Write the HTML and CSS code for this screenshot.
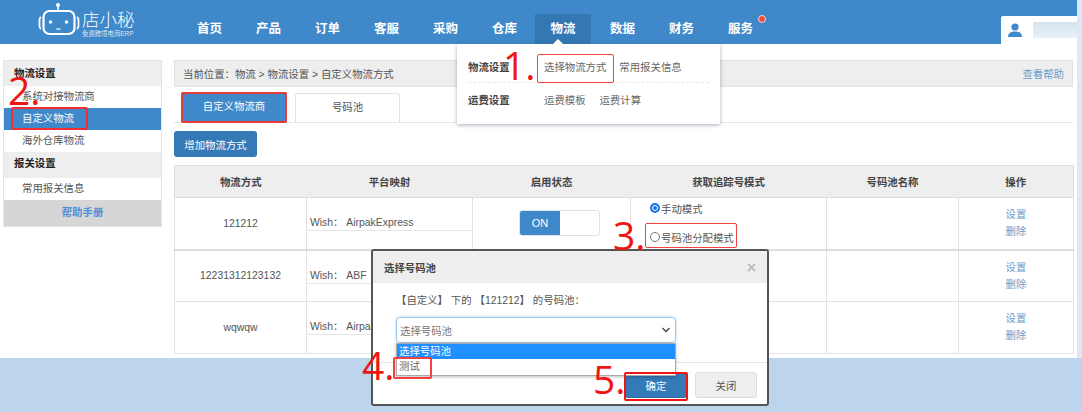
FILE: index.html
```html
<!DOCTYPE html>
<html lang="zh">
<head>
<meta charset="utf-8">
<title>选择物流方式</title>
<link rel="stylesheet" href="styles.css">
</head>
<body>
<div class="page">
  <header class="top">
    <div class="logo">
      <svg class="robot" width="42" height="36" viewBox="0 0 42 36" fill="none" stroke="#fff">
        <circle cx="20" cy="3" r="2" fill="#fff" stroke="none"/>
        <path d="M20 4v5" stroke-width="1.600"/>
        <rect x="5.500" y="9" width="31" height="23" rx="6" stroke-width="2.200"/>
        <path d="M3 15c-1 .5-1.500 1.500-1.500 3v6c0 1.500.5 2.500 1.500 3M39 15c1 .5 1.500 1.500 1.500 3v6c0 1.500-.5 2.500-1.500 3" stroke-width="1.800"/>
        <circle cx="12.500" cy="20" r="1.800" fill="#fff" stroke="none"/>
        <circle cx="28.500" cy="20" r="1.800" fill="#fff" stroke="none"/>
        <path d="M18.500 26.500q2 1.500 4 0" stroke-width="1.200"/>
      </svg>
      <div class="logo-text">
        <div class="logo-name">店小秘</div>
        <div class="logo-sub">免费跨境电商ERP</div>
      </div>
    </div>
    <nav class="nav">
      <a class="nav-item">首页</a>
      <a class="nav-item">产品</a>
      <a class="nav-item">订单</a>
      <a class="nav-item">客服</a>
      <a class="nav-item">采购</a>
      <a class="nav-item">仓库</a>
      <a class="nav-item nav-active">物流</a>
      <a class="nav-item">数据</a>
      <a class="nav-item">财务</a>
      <a class="nav-item">服务<span class="dot"></span></a>
    </nav>
    <div class="user">
      <svg width="16" height="14" viewBox="0 0 16 14" fill="#3f88c9"><circle cx="8" cy="4" r="3.600"/><path d="M1 14c0-4 3-5.500 7-5.500s7 1.500 7 5.500z"/></svg>
      <span class="user-blur"></span>
    </div>
  </header>

  <div class="content">
    <aside class="side">
      <div class="side-head">物流设置</div>
      <a class="side-link">系统对接物流商</a>
      <a class="side-link side-active">自定义物流</a>
      <a class="side-link">海外仓库物流</a>
      <div class="side-head side-head-2">报关设置</div>
      <a class="side-link">常用报关信息</a>
      <div class="side-help">帮助手册</div>
    </aside>

    <main class="main">
      <div class="crumb">
        <span>当前位置：物流 &gt; 物流设置 &gt; 自定义物流方式</span>
        <a class="help">查看帮助</a>
      </div>
      <div class="tabs">
        <a class="tab tab-active">自定义物流商</a>
        <a class="tab tab-pool">号码池</a>
      </div>
      <button class="btn-add">增加物流方式</button>
      <table class="grid">
        <colgroup>
          <col class="c1"><col class="c2"><col class="c3"><col class="c4"><col class="c5"><col class="c6">
        </colgroup>
        <thead>
          <tr><th>物流方式</th><th>平台映射</th><th>启用状态</th><th>获取追踪号模式</th><th>号码池名称</th><th>操作</th></tr>
        </thead>
        <tbody>
          <tr class="row-first">
            <td>121212</td>
            <td class="map"><div class="map-a">Wish：&nbsp;AirpakExpress</div><div class="map-b"></div></td>
            <td><span class="toggle"><span class="toggle-on">ON</span></span></td>
            <td class="mode">
              <div class="mode-line mode-1"><span class="radio radio-on"></span>手动模式</div>
              <div class="mode-line mode-2"><span class="radio"></span>号码池分配模式</div>
            </td>
            <td></td>
            <td class="ops"><a>设置</a><a>删除</a></td>
          </tr>
          <tr class="row-mid">
            <td>12231312123132</td>
            <td class="map"><div class="map-a">Wish：&nbsp;ABF</div><div class="map-b"></div></td>
            <td></td><td></td><td></td>
            <td class="ops"><a>设置</a><a>删除</a></td>
          </tr>
          <tr>
            <td>wqwqw</td>
            <td class="map"><div class="map-a">Wish：&nbsp;AirpakExpress</div><div class="map-b"></div></td>
            <td></td><td></td><td></td>
            <td class="ops"><a>设置</a><a>删除</a></td>
          </tr>
        </tbody>
      </table>
    </main>
  </div>
</div>
<div class="page-strip"></div>

<div class="menu">
  <span class="menu-caret"></span>
  <div class="menu-row menu-row-1">
    <b class="menu-title">物流设置</b>
    <a class="menu-link">选择物流方式</a>
    <a class="menu-link menu-link-b">常用报关信息</a>
  </div>
  <div class="menu-row">
    <b class="menu-title">运费设置</b>
    <a class="menu-link">运费模板</a>
    <a class="menu-link menu-link-c">运费计算</a>
  </div>
</div>

<div class="modal">
  <div class="modal-head"><span>选择号码池</span><span class="modal-x">×</span></div>
  <div class="modal-body">
    <p class="modal-text">【自定义】 下的 【121212】 的号码池：</p>
    <div class="select">选择号码池
      <svg width="10" height="6" viewBox="0 0 10 6" fill="none" stroke="#444" stroke-width="1.300"><path d="M1.500 1l3.500 3.500 3.500-3.500"/></svg>
    </div>
  </div>
  <div class="modal-foot">
    <button class="btn-ok">确定</button>
    <button class="btn-close">关闭</button>
  </div>
  <div class="options">
    <div class="opt opt-sel">选择号码池</div>
    <div class="opt opt-2">测试</div>
  </div>
</div>

<span class="mark m1">1.</span>
<span class="mark m2">2.</span>
<span class="mark m3">3.</span>
<span class="mark m4">4.</span>
<span class="mark m5">5.</span>
<span class="box b1"></span>
<span class="box b2"></span>
<span class="box b3"></span>
<span class="box b4"></span>
<span class="box b5"></span>
<span class="box b6"></span>
</body>
</html>
```

FILE: styles.css
```css
* { box-sizing: border-box; }
html, body { margin: 0; padding: 0; }
body {
  width: 1082px;
  height: 412px;
  overflow: hidden;
  position: relative;
  background: #bcd5ec;
  font-family: "Liberation Sans", "Noto Sans CJK SC", sans-serif;
  font-size: 10.4px;
  color: #555;
}
a { text-decoration: none; }
.page { width: 1077px; height: 358px; background: #fff; }
.page-strip { position: absolute; left: 1077px; top: 0; width: 5px; height: 358px; background: #dce9f6; }

.top { height: 44px; background: #3f88c9; display: flex; align-items: flex-end; }
.logo { width: 150px; height: 44px; padding: 2px 0 0 38px; display: flex; flex: none; }
.robot { flex: none; }
.logo-text { margin: 8px 0 0 2px; color: #fff; }
.logo-name { font-size: 17.500px; line-height: 20px; font-weight: 300; white-space: nowrap; }
.logo-sub { font-size: 6.400px; line-height: 8px; opacity: .8; white-space: nowrap; }
.nav { display: flex; margin-left: 30px; height: 30px; }
.nav-item {
  width: 59px; height: 30px; text-align: center;
  color: #fff; font-size: 12.500px; font-weight: 700; line-height: 31px; position: relative;
}
.nav-active { background: #3478b3; width: 56px; margin: 0 2px 0 1px; }
.dot {
  position: absolute; left: 47px; top: 1px; width: 8px; height: 8px; border-radius: 50%;
  background: #f04a40; border: 1px solid #fbd5d0;
}
.user {
  margin-left: auto; width: 76px; height: 28px; background: #fff;
  display: flex; align-items: center; padding-left: 6px; border-radius: 2px 0 0 0;
}
.user-blur { width: 44px; height: 16px; margin-left: 10px; background: linear-gradient(#d5e3f1, #eaf1f8); }

.content { display: flex; align-items: flex-start; padding: 16px 4px 0 3px; }
.side { width: 159px; flex: none; border: 1px solid #e4e4e4; background: #fff; margin-right: 12px; }
.side-head {
  height: 25px; background: #eee; color: #222; font-weight: 700;
  line-height: 25px; padding-left: 10px;
}
.side-head-2 { height: 26px; line-height: 24px; }
.side-link { display: block; height: 22px; line-height: 21px; padding-left: 18px; color: #555; }
.side-active { background: #3f88c9; color: #fff; }
.side-help { height: 26px; line-height: 26px; text-align: center; background: #d6d6d6; color: #4a90d6; font-weight: 700; }

.main { width: 899px; flex: none; }
.crumb {
  height: 27px; background: #eee; border: 1px solid #e2e2e2; display: flex;
  justify-content: space-between; align-items: center; padding: 0 8px; color: #555;
}
.help { color: #6d9bcb; }
.tabs { display: flex; gap: 8px; height: 35px; padding-left: 7px; border-bottom: 1px solid #e6e6e6; margin-top: 1px; align-items: flex-end; }
.tab {
  width: 106px; height: 29px; line-height: 28px; text-align: center; border: 1px solid #e2e2e2;
  border-bottom: none; border-radius: 3px 3px 0 0; color: #555; background: #fff;
}
.tab-active { background: #3f88c9; color: #fff; border-color: #3f88c9; height: 30px; }
.tab-pool { width: 105px; }
.btn-add {
  display: block; margin-top: 8px; width: 83px; height: 26px; padding: 0; border: 0; border-radius: 3px;
  background: #337ab7; color: #fff; font: inherit;
}
.grid { margin-top: 8px; width: 899px; table-layout: fixed; border-collapse: collapse; border: 1px solid #ddd; }
.c1 { width: 132px; } .c2 { width: 166px; } .c3 { width: 158px; } .c4 { width: 196px; } .c5 { width: 132px; } .c6 { width: 115px; }
.grid th {
  height: 32px; background: #eee; color: #444; font-weight: 700;
  border-bottom: 1px solid #ddd; padding: 0; text-align: center;
}
.grid td { height: 52px; padding: 0; text-align: center; border: 1px solid #e2e2e2; color: #555; }
.grid .row-first td { border-bottom: 2px solid #ddd; }
.grid .row-mid td { height: 51px; }
.grid .map { text-align: left; vertical-align: top; }
.map-a { height: 33px; padding: 19px 0 0 3px; line-height: 12px; border-bottom: 1px solid #e6e6e6; white-space: nowrap; overflow: hidden; }
.map-b { height: 17px; }
.toggle { display: block; width: 81px; height: 26px; margin-left: 46px; border: 1px solid #e2e2e2; border-radius: 3px; background: #fff; }
.toggle-on { display: block; width: 40px; height: 24px; line-height: 24px; background: #3f88c9; color: #fff; font-size: 11px; text-align: center; border-radius: 2px 0 0 2px; }
.grid .mode { text-align: left; vertical-align: top; padding-left: 19px; }
.mode-line { display: flex; align-items: center; color: #555; }
.mode-1 { height: 20px; }
.mode-2 { height: 20px; margin-top: 9px; }
.radio { width: 10px; height: 10px; margin-right: 1px; border-radius: 50%; border: 1px solid #777; flex: none; background: #fff; }
.radio-on { border: 2px solid #1a73e8; box-shadow: inset 0 0 0 1px #fff; background: #1a73e8; }
.ops a { display: block; color: #6d9bcb; line-height: 17px; }

.menu {
  position: absolute; left: 457px; top: 44px; width: 263px; height: 80px; background: #fff;
  box-shadow: 0 1px 4px rgba(60, 80, 110, .45); padding: 7px 11px 0; z-index: 2;
}
.menu-caret {
  position: absolute; left: 96px; top: -5px; width: 0; height: 0;
  border: 5px solid transparent; border-top: 0; border-bottom-color: #fff;
}
.menu-row { display: flex; align-items: center; height: 32px; }
.menu-row-1 { border-bottom: 1px dashed #e8e8e8; }
.menu-title { color: #444; width: 76px; flex: none; font-weight: 700; }
.menu-link { color: #666; white-space: nowrap; }
.menu-link-b { margin-left: 13px; }
.menu-link-c { margin-left: 14px; }

.modal {
  position: absolute; left: 371px; top: 249px; width: 398px; height: 157px; background: #fff;
  border: 2px solid #555; border-radius: 3px; z-index: 3; display: flex; flex-direction: column;
}
.modal-head {
  height: 32px; flex: none; background: #eee; display: flex; justify-content: space-between; align-items: center;
  padding: 0 11px; color: #444; font-weight: 700;
}
.modal-x { color: #bbb; font-size: 16px; line-height: 15px; font-weight: 700; }
.modal-body { flex: 1; padding: 0 23px; border-bottom: 1px solid #e5e5e5; }
.modal-text { margin: 0; padding-top: 10px; color: #555; line-height: 16px; }
.select {
  margin-top: 8px; width: 280px; height: 26px; border: 1px solid #9cc5ea; border-radius: 4px;
  display: flex; justify-content: space-between; align-items: center; padding: 0 4px 0 3px; color: #777;
  box-shadow: 0 0 3px rgba(102, 175, 233, .5);
}
.modal-foot { height: 41px; flex: none; display: flex; justify-content: flex-end; gap: 8px; padding: 9px 10px 0 0; }
.btn-ok, .btn-close { width: 62px; height: 26px; padding: 0; border-radius: 3px; font: inherit; }
.btn-ok { background: #337ab7; border: 1px solid #2e6da4; color: #fff; }
.btn-close { background: #eee; border: 1px solid #ddd; color: #555; }
.options {
  position: absolute; left: 23px; top: 92px; width: 280px; background: #fff;
  border: 1px solid #aaa; box-shadow: 0 1px 3px rgba(0, 0, 0, .25);
}
.opt { height: 15px; line-height: 15px; padding-left: 2px; color: #666; }
.opt-2 { height: 16px; }
.opt-sel { background: #1e90ff; color: #fff; }

.mark { position: absolute; color: #f01414; font-size: 39px; line-height: 39px; font-family: "Open Sans", sans-serif; z-index: 5; }
.m1 { left: 503px; top: 45px; }
.m2 { left: 8px; top: 70px; }
.m3 { left: 613px; top: 215px; }
.m4 { left: 362px; top: 345px; }
.m5 { left: 593px; top: 359px; }
.box { position: absolute; border: 1px solid #f04040; border-radius: 2px; z-index: 4; }
.b1 { left: 537px; top: 54px; width: 77px; height: 29px; }
.b2 { left: 11px; top: 107px; width: 77px; height: 23px; border-width: 2px; border-color: #f03030; }
.b3 { left: 181px; top: 92px; width: 106px; height: 31px; border-width: 2px; border-color: #e83a3a; }
.b4 { left: 645px; top: 223px; width: 92px; height: 25px; }
.b5 { left: 393px; top: 357px; width: 39px; height: 22px; border-width: 2px; }
.b6 { left: 624px; top: 372px; width: 64px; height: 29px; border-width: 2px; border-color: #f01414; }
```
